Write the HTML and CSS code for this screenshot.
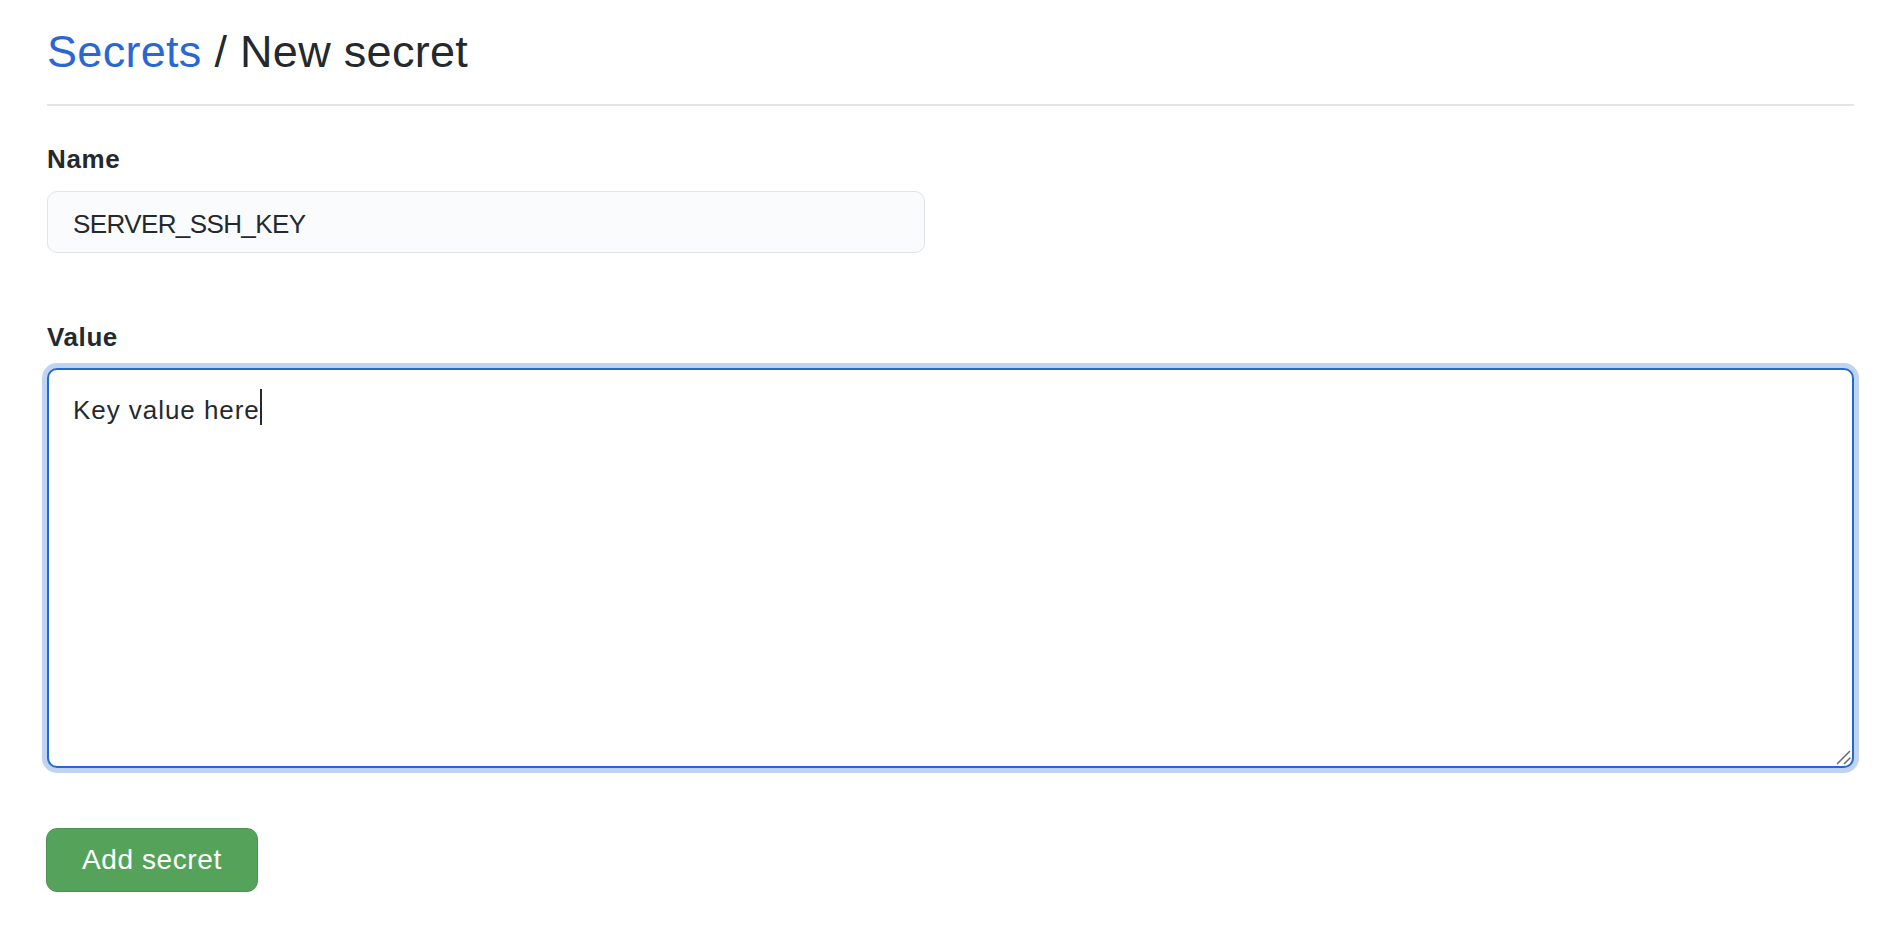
FILE: index.html
```html
<!DOCTYPE html>
<html lang="en">
<head>
<meta charset="utf-8">
<title>New secret</title>
<link rel="stylesheet" href="styles.css">
</head>
<body>
<main class="page">
  <div class="subhead">
    <h2 class="subhead-heading"><a class="crumb" href="#">Secrets</a> / New secret</h2>
  </div>
  <form class="secret-form">
    <div class="form-group name-group">
      <label class="form-label" for="secret-name">Name</label>
      <input class="form-input" id="secret-name" type="text" value="SERVER_SSH_KEY">
    </div>
    <div class="form-group value-group">
      <label class="form-label">Value</label>
      <div class="form-textarea" role="textbox" aria-multiline="true">Key value here<span class="caret"></span><svg class="grip" width="16" height="16" viewBox="0 0 16 16"><path d="M1.5 13.5 L13.5 1.5 M8.5 13.5 L14 8" stroke="#6b6b6b" stroke-width="1.5" fill="none" stroke-linecap="round"/></svg></div>
    </div>
    <div class="form-actions">
      <button class="btn-primary" type="button">Add secret</button>
    </div>
  </form>
</main>
</body>
</html>
```

FILE: styles.css
```css
* { box-sizing: border-box; }

html, body {
  margin: 0;
  padding: 0;
  background: #ffffff;
}

body {
  font-family: "Liberation Sans", Arial, sans-serif;
  color: #24292e;
}

.page {
  padding: 0 44px 0 47px;
}

.subhead {
  padding: 24px 0 24px;
  border-bottom: 2px solid #e1e4e8;
}

.subhead-heading {
  margin: 0;
  font-size: 45px;
  line-height: 56px;
  font-weight: 400;
  letter-spacing: 0.3px;
  color: #24292e;
}

.crumb {
  color: #2968d2;
  text-decoration: none;
}

.secret-form {
  display: flex;
  flex-direction: column;
  padding-top: 34px;
}

.form-label {
  display: block;
  font-size: 26px;
  line-height: 39px;
  font-weight: 700;
  letter-spacing: 0.6px;
  margin-bottom: 12px;
}

.value-group {
  margin-top: 65px;
}

.value-group .form-label {
  margin-bottom: 11px;
}

.form-input {
  display: block;
  width: 878px;
  height: 62px;
  padding: 4px 25px 0;
  font-family: "Liberation Sans", Arial, sans-serif;
  font-size: 26px;
  letter-spacing: -0.6px;
  color: #24292e;
  background: #fafbfc;
  border: 1px solid #e1e4e8;
  border-radius: 10px;
  outline: none;
}

.form-textarea {
  position: relative;
  width: 100%;
  height: 400px;
  padding: 19px 24px;
  font-size: 26px;
  line-height: 37px;
  letter-spacing: 0.95px;
  color: #24292e;
  background: #ffffff;
  border: 2px solid #2767d3;
  border-radius: 10px;
  box-shadow: 0 0 0 5px #bfd4f3;
}

.caret {
  display: inline-block;
  width: 2px;
  height: 36px;
  vertical-align: -6px;
  background: #24292e;
}

.grip {
  position: absolute;
  right: 0;
  bottom: 0;
}

.form-actions {
  margin-top: 60px;
}

.btn-primary {
  display: inline-block;
  height: 64px;
  margin-left: -1px;
  padding: 0 35px;
  font-family: "Liberation Sans", Arial, sans-serif;
  font-size: 28px;
  letter-spacing: 0.6px;
  color: #ffffff;
  background: #55a35a;
  border: 1px solid #4b9250;
  border-radius: 11px;
  cursor: pointer;
}
```
